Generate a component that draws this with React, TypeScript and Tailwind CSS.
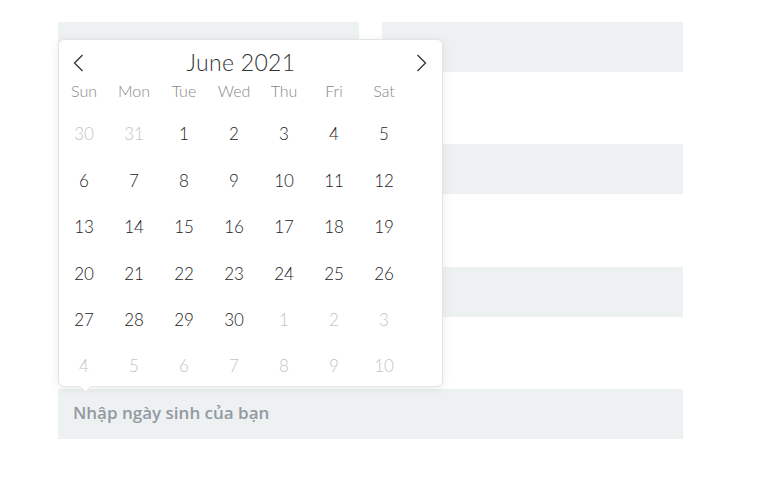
import React from "react";

const Prev = () => (
  <svg width="11" height="18" viewBox="0 0 11 18" fill="none">
    <polyline points="9.5,1 1.5,9 9.5,17" stroke="#333" strokeWidth="1.3" />
  </svg>
);
const Next = () => (
  <svg width="11" height="18" viewBox="0 0 11 18" fill="none">
    <polyline points="1.5,1 9.5,9 1.5,17" stroke="#333" strokeWidth="1.3" />
  </svg>
);

const dayNames = ["Sun", "Mon", "Tue", "Wed", "Thu", "Fri", "Sat"];

type Cell = { d: number; cur: boolean };

function buildCells(): Cell[] {
  const cells: Cell[] = [];
  cells.push({ d: 30, cur: false }, { d: 31, cur: false });
  for (let i = 1; i <= 30; i++) cells.push({ d: i, cur: true });
  for (let i = 1; i <= 10; i++) cells.push({ d: i, cur: false });
  return cells;
}

function Field({ children }: { children?: React.ReactNode }) {
  return (
    <div className="flex flex-col">
      <div className="h-[20px] mb-[17px]" />
      <div className="h-[50px] bg-[#eef1f2] flex items-center px-[15px]">{children}</div>
    </div>
  );
}

export default function App() {
  const cells = buildCells();
  const rows: Cell[][] = [];
  for (let i = 0; i < 6; i++) rows.push(cells.slice(i * 7, i * 7 + 7));

  return (
    <div
      className="relative w-[777px] h-[477px] bg-white overflow-hidden"
      style={{ fontFamily: "Lato, 'Noto Sans', sans-serif" }}
    >
      <div className="ml-[58px] w-[625px] mt-[-15px] flex flex-col gap-[35px]">
        <div className="grid grid-cols-2 gap-[23px]">
          <Field />
          <Field />
        </div>
        <Field />
        <div className="mt-[1px]">
          <Field />
        </div>
        <Field>
          <span
            className="text-[17px] font-semibold text-[#929aa2] mt-[-2px]"
            style={{ fontFamily: "'Open Sans', sans-serif" }}
          >
            Nhập ngày sinh của bạn
          </span>
        </Field>
      </div>

      <div className="absolute left-[58px] top-[39px] w-[385px] h-[348px] rounded-[6px] border border-[#e4e4e4] bg-white shadow-[0_2px_10px_rgba(0,0,0,0.08)]">
        <div className="h-[41px] pt-[4px] flex items-center justify-between pl-[14px] pr-[15px]">
          <Prev />
          <div className="text-[23px] font-light text-[#333] ml-[-18px] tracking-[0.3px]">June 2021</div>
          <Next />
        </div>
        <div className="grid grid-cols-7 w-[350px] h-[20px] items-center">
          {dayNames.map((n) => (
            <div key={n} className="text-center text-[16px] font-light text-[#888] leading-[20px]">
              {n}
            </div>
          ))}
        </div>
        <div className="mt-[10px] w-[350px]">
          {rows.map((r, ri) => (
            <div key={ri} className="grid grid-cols-7 h-[46.4px] items-center">
              {r.map((c, ci) => (
                <div
                  key={ci}
                  className={`text-center text-[17px] font-light ${c.cur ? "text-[#222]" : "text-[#c4c4c4]"}`}
                >
                  {c.d}
                </div>
              ))}
            </div>
          ))}
        </div>
        <div className="absolute left-[22px] bottom-[-5px] w-[9px] h-[9px] bg-white border-r border-b border-[#e4e4e4] rotate-45" />
      </div>
    </div>
  );
}
